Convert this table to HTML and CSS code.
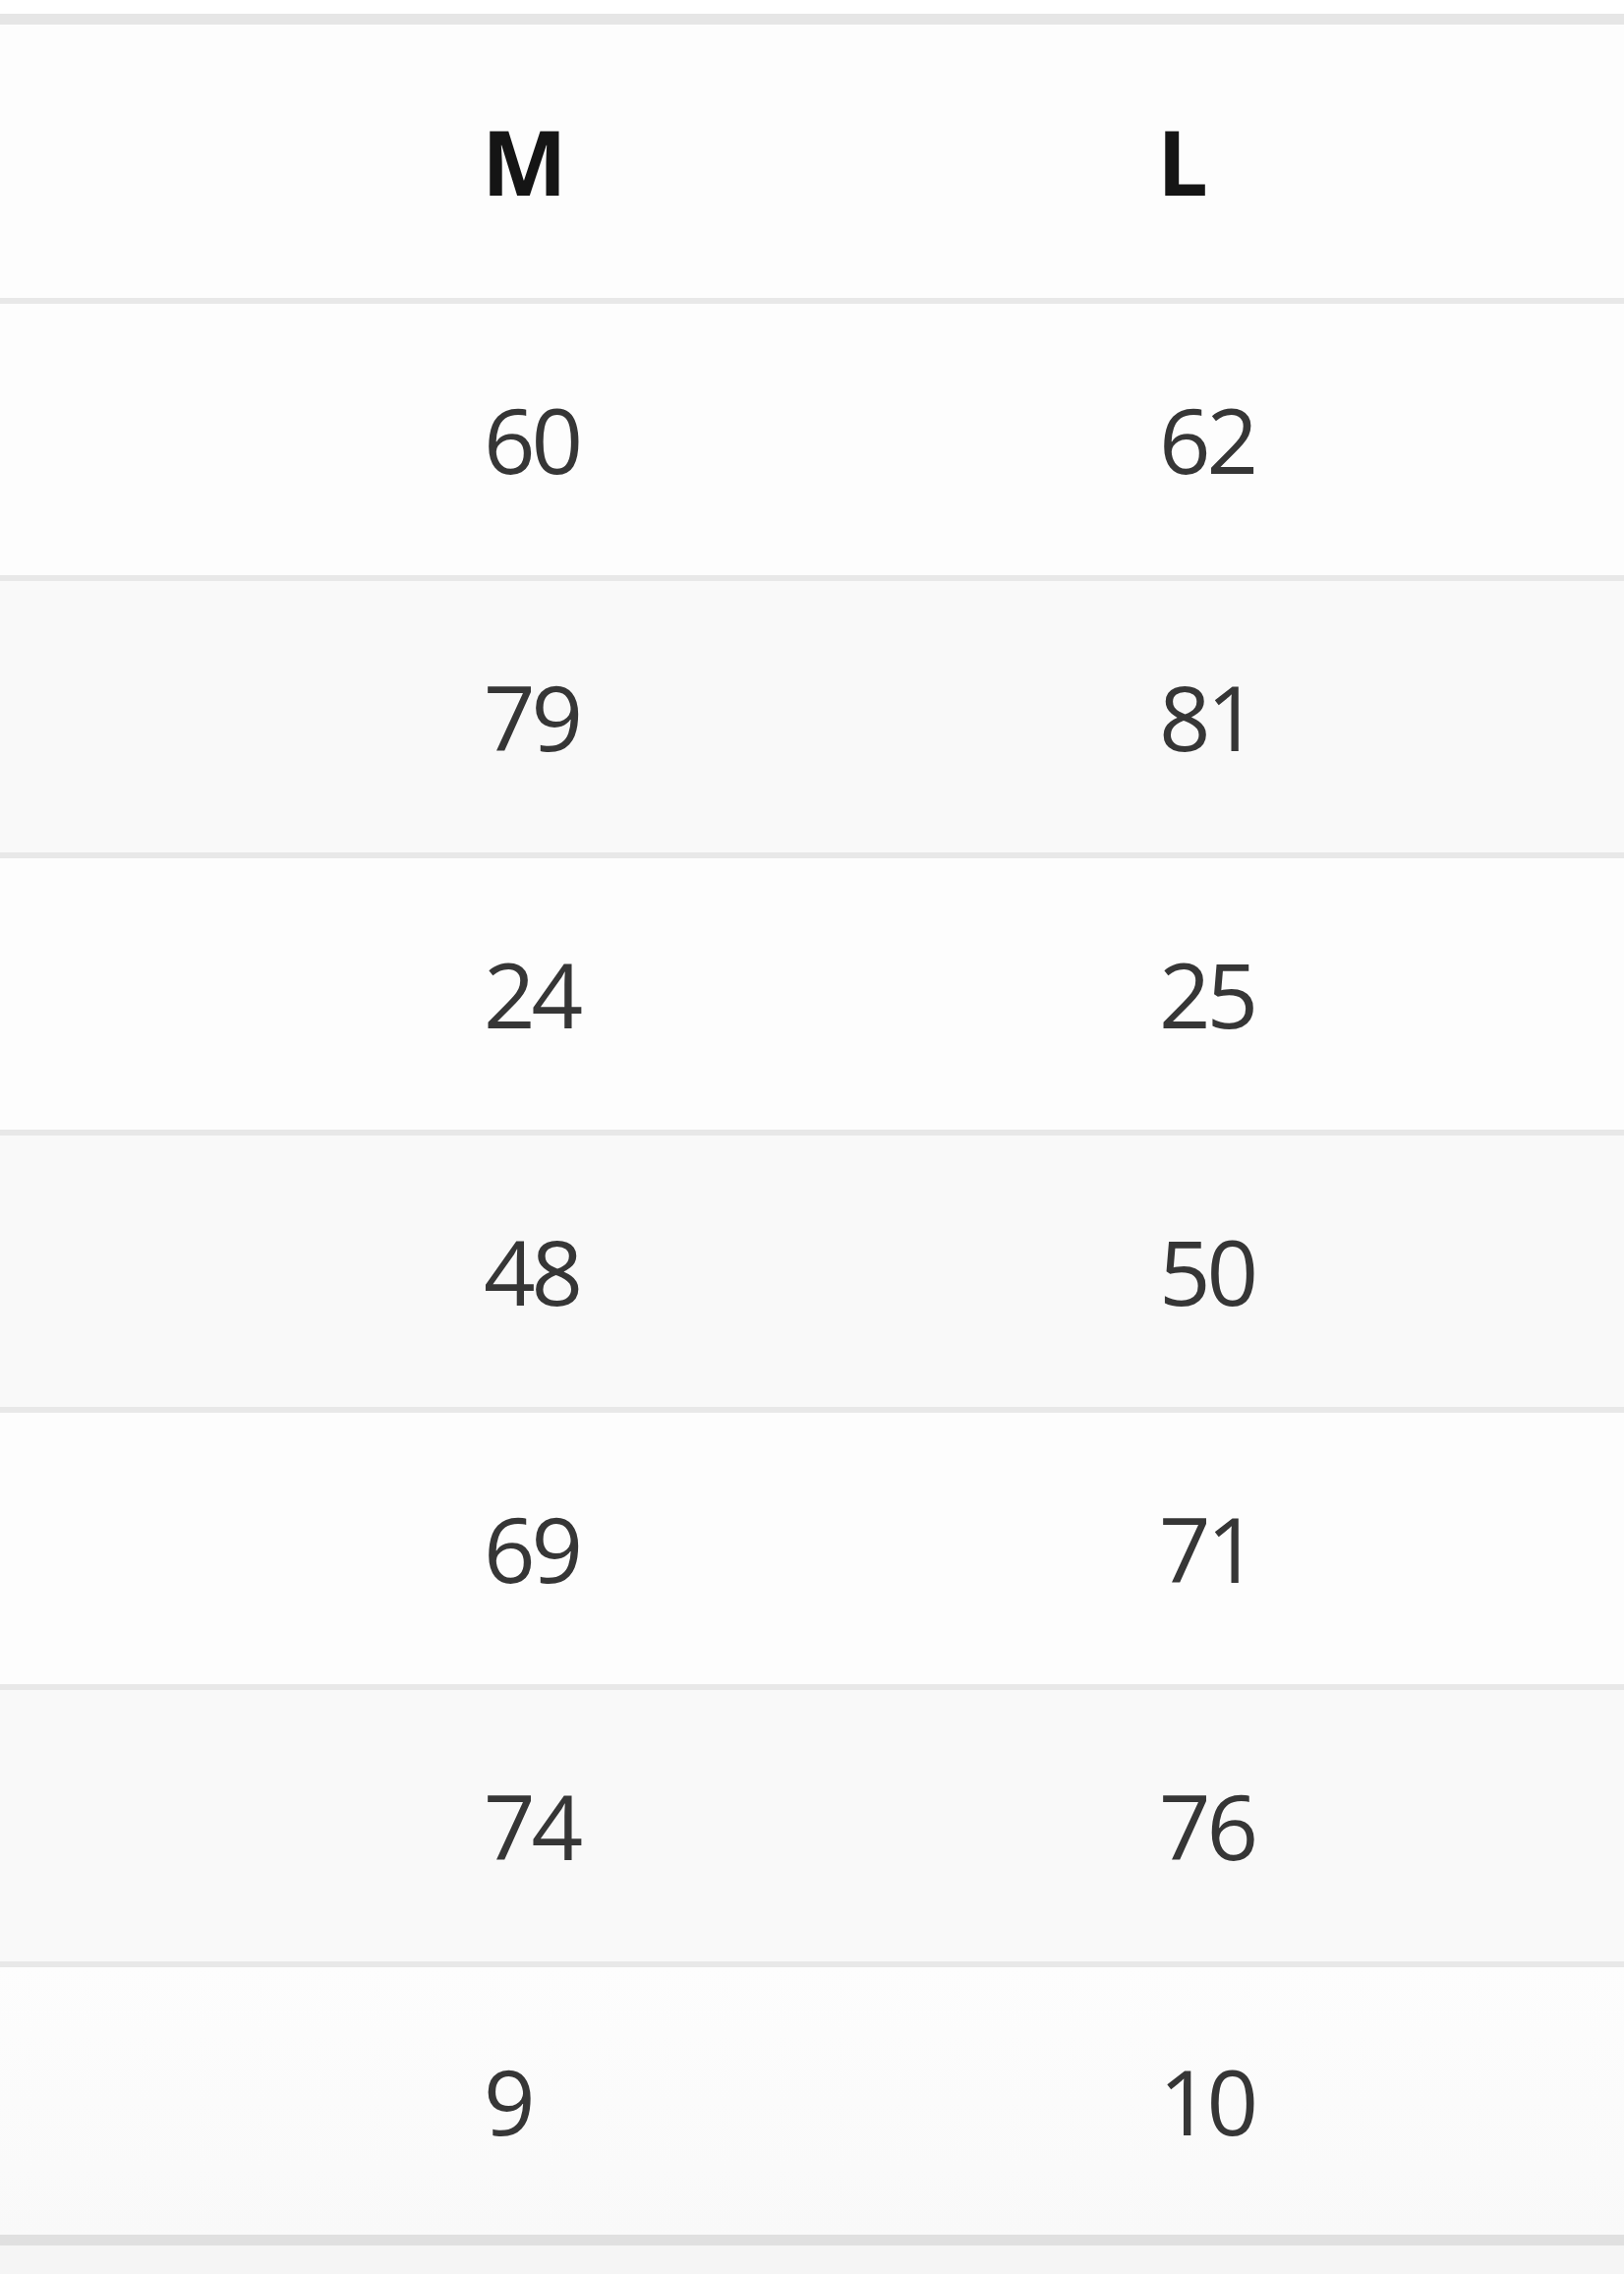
FILE: index.html
```html
<!DOCTYPE html>
<html lang="en">
<head>
<meta charset="utf-8">
<title>Size chart</title>
<link rel="stylesheet" href="styles.css">
</head>
<body>
<div class="wrap">
  <table class="sizes">
    <colgroup>
      <col class="c-label">
      <col class="c-m">
      <col class="c-l">
    </colgroup>
    <thead>
      <tr><th></th><th>M</th><th>L</th></tr>
    </thead>
    <tbody>
      <tr><td></td><td>60</td><td>62</td></tr>
      <tr class="alt"><td></td><td>79</td><td>81</td></tr>
      <tr><td></td><td>24</td><td>25</td></tr>
      <tr class="alt"><td></td><td>48</td><td>50</td></tr>
      <tr><td></td><td>69</td><td>71</td></tr>
      <tr class="alt"><td></td><td>74</td><td>76</td></tr>
      <tr class="last"><td></td><td>9</td><td>10</td></tr>
    </tbody>
  </table>
</div>
</body>
</html>
```
FILE: styles.css
```css
html, body {
  margin: 0;
  padding: 0;
  background: #f5f5f5;
}
.wrap {
  background: #ffffff;
  padding-top: 14px;
}
.sizes {
  width: 100%;
  border-collapse: collapse;
  table-layout: fixed;
  font-family: "Open Sans", "Noto Sans", sans-serif;
  font-size: 92px;
  line-height: 1;
  border-top: 11px solid #e6e6e6;
  border-bottom: 11px solid #e0e0e0;
}
.c-label { width: 490px; }
.c-m { width: 687px; }
.sizes th,
.sizes td {
  padding: 0;
  text-align: left;
  vertical-align: middle;
}
.sizes th {
  height: 278px;
  font-weight: 700;
  color: #151515;
  background: #fdfdfd;
}
.sizes td {
  height: 276px;
  padding-left: 2px;
  font-weight: 450;
  letter-spacing: -4px;
  color: #363636;
  background: #fdfdfd;
}
.sizes thead tr {
  border-bottom: 6px solid #e8e8e8;
}
.sizes tbody tr {
  border-bottom: 6px solid #e8e8e8;
}
.sizes tbody tr.alt td {
  background: #f9f9f9;
}
.sizes tbody tr.last {
  border-bottom: none;
}
.sizes tbody tr.last td {
  height: 272px;
  background: linear-gradient(#fdfdfd, #f9f9f9);
}
```
